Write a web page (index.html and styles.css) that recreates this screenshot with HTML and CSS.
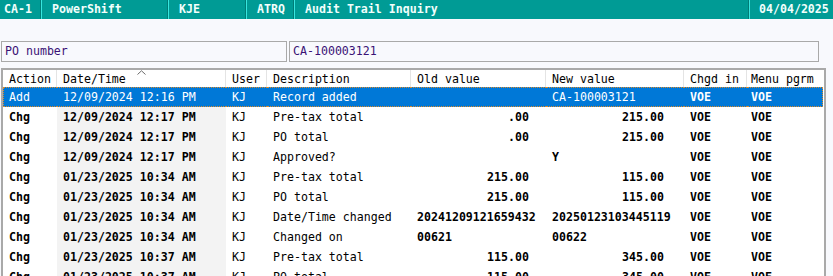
FILE: index.html
```html
<!DOCTYPE html>
<html lang="en">
<head>
  <meta charset="UTF-8" />
  <meta name="viewport" content="width=device-width, initial-scale=1.0" />
  <title>Audit Trail Inquiry</title>
  <link rel="stylesheet" href="styles.css">
</head>
<body>
  <!-- Barra de estado superior -->
  <header class="status-bar">
    <div class="status-cell cell-company">CA-1</div>
    <div class="status-cell cell-app">PowerShift</div>
    <div class="status-cell cell-user">KJE</div>
    <div class="status-cell cell-code">ATRQ</div>
    <div class="status-cell cell-title">Audit Trail Inquiry</div>
    <div class="status-cell cell-date">04/04/2025</div>
  </header>

  <div class="key-row">
    <div class="key-box key-label">PO number</div>
    <div class="key-box key-value">CA-100003121</div>
  </div>

  <div class="grid">
    <table class="audit-table">
      <colgroup>
        <col class="c-action">
        <col class="c-date">
        <col class="c-user">
        <col class="c-desc">
        <col class="c-old">
        <col class="c-new">
        <col class="c-chgd">
        <col class="c-menu">
      </colgroup>
      <thead>
        <tr>
          <th>Action</th>
          <th class="sorted">Date/Time
            <svg class="sort-caret" width="9" height="5" viewBox="0 0 9 5"><path d="M0.5 4.5 L4.5 0.8 L8.5 4.5" fill="none" stroke="#6b6b6b" stroke-width="1"/></svg>
          </th>
          <th>User</th>
          <th>Description</th>
          <th>Old value</th>
          <th>New value</th>
          <th>Chgd in</th>
          <th>Menu pgrm</th>
        </tr>
      </thead>
      <tbody id="rows"></tbody>
    </table>
  </div>

  <script>
    const registros = [
      ['Add', '12/09/2024 12:16 PM', 'KJ', 'Record added', '', 'CA-100003121', 'VOE', 'VOE', true],
      ['Chg', '12/09/2024 12:17 PM', 'KJ', 'Pre-tax total', '.00', '215.00', 'VOE', 'VOE'],
      ['Chg', '12/09/2024 12:17 PM', 'KJ', 'PO total', '.00', '215.00', 'VOE', 'VOE'],
      ['Chg', '12/09/2024 12:17 PM', 'KJ', 'Approved?', '', 'Y', 'VOE', 'VOE'],
      ['Chg', '01/23/2025 10:34 AM', 'KJ', 'Pre-tax total', '215.00', '115.00', 'VOE', 'VOE'],
      ['Chg', '01/23/2025 10:34 AM', 'KJ', 'PO total', '215.00', '115.00', 'VOE', 'VOE'],
      ['Chg', '01/23/2025 10:34 AM', 'KJ', 'Date/Time changed', '20241209121659432', '20250123103445119', 'VOE', 'VOE'],
      ['Chg', '01/23/2025 10:34 AM', 'KJ', 'Changed on', '00621', '00622', 'VOE', 'VOE'],
      ['Chg', '01/23/2025 10:37 AM', 'KJ', 'Pre-tax total', '115.00', '345.00', 'VOE', 'VOE'],
      ['Chg', '01/23/2025 10:37 AM', 'KJ', 'PO total', '115.00', '345.00', 'VOE', 'VOE']
    ];

    // Los importes van alineados a la derecha, el resto a la izquierda
    const esNumero = v => /^[\d.]+$/.test(v) && v.includes('.');

    const cuerpo = document.getElementById('rows');
    registros.forEach(r => {
      const tr = document.createElement('tr');
      if (r[8]) tr.className = 'selected';
      const clases = ['action', 'date', 'user', 'desc', 'old', 'new', 'chgd', 'menu'];
      for (let i = 0; i < 8; i++) {
        const td = document.createElement('td');
        td.className = clases[i];
        if ((i === 4 || i === 5) && esNumero(r[i])) td.classList.add('num');
        td.textContent = r[i];
        tr.appendChild(td);
      }
      cuerpo.appendChild(tr);
    });
  </script>
</body>
</html>
```

FILE: styles.css
```css
body {
  margin: 0;
  background: #f8f9fd;
  font-family: 'DejaVu Sans Mono', 'Liberation Mono', monospace;
  font-size: 11.6px;
  color: #000;
  height: 276px;
  overflow: hidden;
}

/* Barra superior */
.status-bar {
  display: flex;
  height: 19px;
  background: #009b95;
  color: #f2fffc;
  font-weight: bold;
}
.status-cell {
  box-sizing: border-box;
  line-height: 19px;
  padding-left: 10px;
  white-space: nowrap;
  border-right: 1px solid #007c77;
  box-shadow: 1px 0 0 #38e6df;
  margin-right: 1px;
}
.cell-company { width: 41px; padding-left: 4px; }
.cell-app { width: 126px; }
.cell-user { width: 77px; }
.cell-code { width: 47px; }
.cell-title { flex: 1; }
.cell-date { border: none; box-shadow: none; margin: 0; padding-left: 9px; width: 83px; }

/* Campo clave */
.key-row {
  display: flex;
  gap: 2px;
  margin: 22px 0 0 1px;
  width: 818px;
}
.key-box {
  box-sizing: border-box;
  height: 21px;
  line-height: 19px;
  border: 1px solid #a9a9a9;
  padding-left: 3px;
  color: #3a1275;
}
.key-label { width: 286px; }
.key-value { flex: 1; }

/* Grilla */
.grid {
  margin: 6px 0 0 1px;
  width: 825px;
  box-sizing: border-box;
  border: 2px solid #a9a9a9;
  border-bottom: none;
  background: #fff;
  height: 300px;
}
.audit-table {
  table-layout: fixed;
  border-collapse: separate;
  border-spacing: 0;
  width: 820px;
}
.c-action { width: 54px; }
.c-date { width: 169px; }
.c-user { width: 41px; }
.c-desc { width: 144px; }
.c-old { width: 135px; }
.c-new { width: 138px; }
.c-chgd { width: 63px; }
.c-menu { width: 76px; }

.audit-table th {
  height: 17px;
  padding: 0 0 0 6px;
  text-align: left;
  font-weight: normal;
  border-right: 1px solid #e4e4e4;
  position: relative;
  white-space: nowrap;
}
.audit-table th:last-child { border-right: none; padding-left: 4px; }
.sort-caret {
  position: absolute;
  top: 0;
  left: 80px;
}
.audit-table td {
  height: 20px;
  padding: 0 0 0 6px;
  white-space: nowrap;
  overflow: hidden;
  box-sizing: border-box;
}
.audit-table td.date { background: #f3f3f3; font-weight: bold; }
.audit-table td.action,
.audit-table td.old,
.audit-table td.new,
.audit-table td.chgd,
.audit-table td.menu { font-weight: bold; }
.audit-table td.menu { padding-left: 4px; }
.audit-table td.num { text-align: right; padding-right: 17px; }
.audit-table td.new.num { padding-right: 20px; }

.audit-table tr.selected td {
  background: #0078d7;
  color: #fff;
  font-weight: normal;
  border-top: 1px dotted #d98a2b;
  border-bottom: 1px dotted #d98a2b;
}
.audit-table tr.selected td.chgd,
.audit-table tr.selected td.menu { font-weight: bold; }
.audit-table tr.selected td:first-child { border-left: 1px dotted #d98a2b; padding-left: 5px; }
.audit-table tr.selected td:last-child { border-right: 1px dotted #d98a2b; }
```
